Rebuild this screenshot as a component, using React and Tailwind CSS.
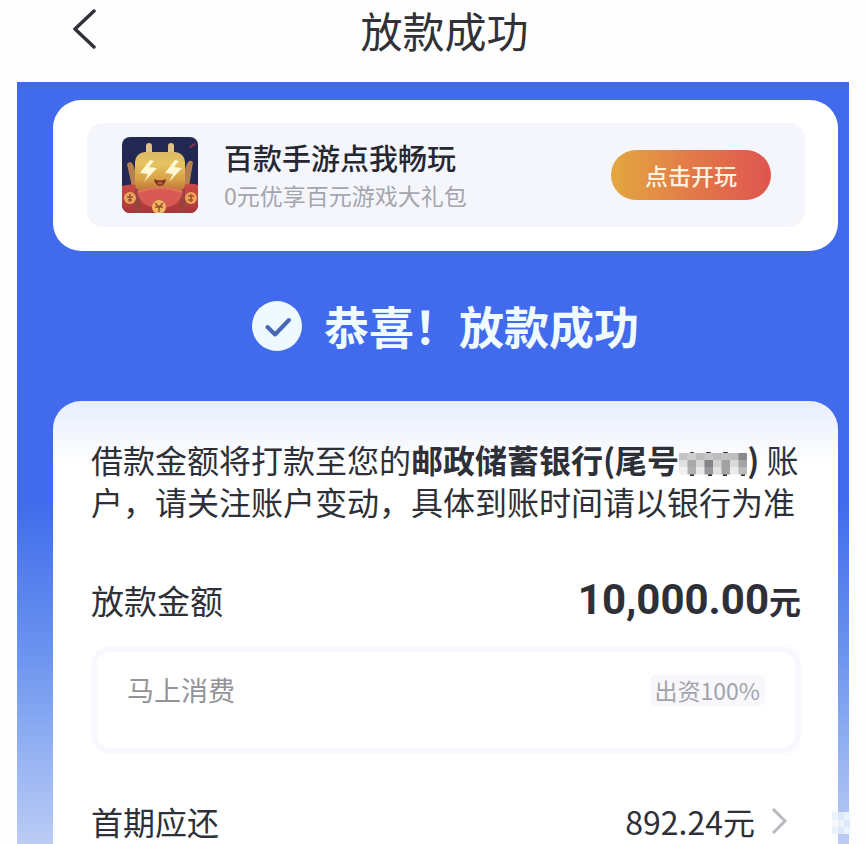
const maskCells = [
  ["#c4c4c4", "#cfcfcf", "#bdbdbd", "#c6c6c6", "#bcbcbc", "#c3c3c3", "#bebebe", "#8a8a8a"],
  ["#e0e0e0", "#a9a9a9", "#d6d6d6", "#858589", "#d2d2d2", "#a2a2a2", "#dadada", "#a4a4a6"],
  ["#f0f0f0", "#b0b0b0", "#e8e8e8", "#97979a", "#e2e2e2", "#a3a3a3", "#ebebeb", "#bcbcbe"],
];

function MaskedDigits() {
  return (
    <svg className="inline-block w-[68px] h-6" viewBox="0 0 68 24" aria-hidden="true">
      <g fill="#2e3038">
        <rect x="11" y="0" width="4" height="3" rx="1" />
        <rect x="27" y="0" width="5" height="3" rx="1" />
        <rect x="44" y="0" width="5" height="3" rx="1" />
        <rect x="11" y="21" width="4" height="3" />
        <rect x="29" y="21" width="4" height="3" />
        <rect x="44" y="21" width="4" height="3" />
        <rect x="62" y="21" width="4" height="3" />
      </g>
      {maskCells.map((row, y) =>
        row.map((fill, x) => (
          <rect key={`${x}-${y}`} x={x * 8.5} y={1 + y * 7} width="9" height="7.5" fill={fill} />
        ))
      )}
    </svg>
  );
}

function GameIcon() {
  return (
    <svg className="size-[76px] rounded-lg shrink-0" viewBox="0 0 76 76" aria-hidden="true">
      <defs>
        <linearGradient id="face" x1="0" y1="0" x2="0" y2="1">
          <stop offset="0" stopColor="#d9b865" />
          <stop offset="0.3" stopColor="#e6c35f" />
          <stop offset="0.7" stopColor="#d89c45" />
          <stop offset="1" stopColor="#b96a37" />
        </linearGradient>
        <linearGradient id="suit" x1="0" y1="0" x2="0" y2="1">
          <stop offset="0" stopColor="#cb4a46" />
          <stop offset="1" stopColor="#a8383a" />
        </linearGradient>
      </defs>
      <rect width="76" height="76" fill="#222851" />
      <path d="M67 10l5-4 2 1-5 4z" fill="#8e3048" />
      <path d="M5 27q4-5 7 3l5 20H10z" fill="#b58152" />
      <path d="M71 25q-4-4-7 4l-6 21h9z" fill="#b58152" />
      <rect x="24" y="6" width="6" height="13" rx="3" fill="#e0c285" />
      <rect x="46" y="6" width="6" height="13" rx="3" fill="#e0c285" />
      <path d="M0 49q10-3 17 0h43q8-4 16-1v28H0z" fill="url(#suit)" />
      <path d="M13 52h5v24h-5zM58 52h5v24h-5z" fill="#97453c" />
      <rect x="13" y="15" width="50" height="41" rx="10" fill="url(#face)" />
      <path d="M15 54q23-7 46 0-3 17-23 17T15 54z" fill="#d85a54" />
      <path d="M16 55q22-8 44 0" fill="none" stroke="#e1745b" strokeWidth="2" />
      <path d="M28 23L18 36l8 1-4 8 13-14-8-1 5-6zM53 23L43 36l8 1-4 8 13-14-8-1 5-6z" fill="#fff9d4" />
      <path d="M32 42q6 3 12 0-1 7-6 7t-6-7z" fill="#79351f" />
      <path d="M35 46q3-2 6 0-3 3-6 0z" fill="#d4564a" />
      <circle cx="8" cy="61" r="6" fill="#e9a65c" />
      <circle cx="69" cy="61" r="6" fill="#e9a65c" />
      <circle cx="37" cy="70" r="7" fill="#f0b863" />
      <path d="M5 60h6M8 57v8M6 63h4M66 59h6M69 57v8M66 63h5M33 66l4 4 4-4M33 70h8M37 70v5" stroke="#a04c2b" strokeWidth="1.5" fill="none" />
    </svg>
  );
}

function PromoCard() {
  return (
    <section className="rounded-[28px] bg-white pt-[23px] pb-6 pl-[34px] pr-[33px]">
      <div className="flex items-center rounded-2xl bg-[#f5f6fc] py-[14px] pl-[35px] pr-[34px]">
        <GameIcon />
        <div className="ml-[26px] flex-1">
          <h2 className="text-[29px] leading-10 font-medium text-[#252832]">百款手游点我畅玩</h2>
          <p className="text-[23px] leading-9 text-[#a4a5ad]">0元优享百元游戏大礼包</p>
        </div>
        <button
          type="button"
          className="h-[50px] w-40 shrink-0 rounded-full bg-linear-to-r from-[#e2a740] via-[#e27a48] to-[#de544f] text-[23px] leading-8 font-medium text-[#fff2df]"
        >
          点击开玩
        </button>
      </div>
    </section>
  );
}

function LoanCard() {
  return (
    <section className="flex-1 rounded-t-[28px] bg-linear-to-b from-[#e6edfc] to-white to-[64px] pt-[37px] pl-[38px] pr-[37px] text-[#2e3038]">
      <p className="text-[32px] leading-[42px]">
        借款金额将打款至您的
        <b className="font-bold">
          邮政储蓄银行(尾号
          <MaskedDigits />)
        </b>{" "}
        账户，请关注账户变动，具体到账时间请以银行为准
      </p>

      <div className="mt-[51px] flex items-center justify-between">
        <span className="text-[33px] leading-[54px]">放款金额</span>
        <span className="flex items-center font-bold">
          <span className="font-['Roboto',sans-serif] text-[42px] leading-[54px]">10,000.00</span>
          <span className="text-[32px] leading-[54px]">元</span>
        </span>
      </div>

      <div className="mt-[19px] flex h-[108px] items-start justify-between rounded-[20px] border-[6px] border-[#f8f9fe] pt-[18px] pl-[30px] pr-[30px]">
        <span className="text-[27px] leading-10 text-[#939399]">马上消费</span>
        <span className="mt-1 rounded-md bg-[#f8f8fc] px-[5px] text-[23px] leading-8 text-[#a2a3aa]">出资100%</span>
      </div>

      <div className="mt-[42px] flex items-center justify-between text-[32px] leading-[50px]">
        <span>首期应还</span>
        <a href="#plan" className="flex items-center">
          892.24元
          <svg className="ml-4 mr-[14px] h-[26px] w-4" viewBox="0 0 16 26" fill="none" stroke="#b9bac0" strokeWidth="3">
            <path d="M2 1l12 12L2 25" />
          </svg>
        </a>
      </div>
    </section>
  );
}

export default function App() {
  return (
    <div className="relative flex min-h-screen flex-col bg-[#fefefe] font-['Noto_Sans_CJK_SC',sans-serif]">
      <header className="grid h-[82px] grid-cols-[1fr_auto_1fr] items-start pl-[72px] pr-[49px]">
        <button type="button" aria-label="返回" className="mt-[9px] w-6">
          <svg className="h-10 w-6" viewBox="0 0 24 40" fill="none" stroke="#303238" strokeWidth="3.5" strokeLinecap="round" strokeLinejoin="round">
            <path d="M22 2L3 20l19 18" />
          </svg>
        </button>
        <h1 className="text-[42px] leading-[60px] text-[#303238]">放款成功</h1>
      </header>

      <main className="mx-[17px] flex flex-1 flex-col bg-linear-to-b from-[#416bec] from-55% via-[#6c94ef] via-75% to-[#bccdf5] pt-[18px] pl-9 pr-[11px]">
        <PromoCard />
        <div className="flex items-center justify-center gap-[22px] py-[45px]">
          <svg className="size-[50px]" viewBox="0 0 50 50" fill="none">
            <circle cx="25" cy="25" r="25" fill="#eefaff" />
            <path d="M15.500 26l7.500 7.500L37 19" stroke="#4767b5" strokeWidth="4" strokeLinecap="round" strokeLinejoin="round" />
          </svg>
          <h2 className="text-[45px] leading-[60px] font-bold text-[#f0fbff]">恭喜！放款成功</h2>
        </div>
        <LoanCard />
      </main>

      <svg className="absolute right-4 bottom-3 h-[22px] w-[18px]" viewBox="0 0 18 22" aria-hidden="true">
        <path fill="#eaf2fb" d="M0 0h18v22H0z" />
        <path fill="#dde8f8" d="M6 0h6v8H6zM12 8h6v7h-6zM6 15h6v7H6z" />
        <path fill="#f5f9fd" d="M0 8h6v7H0z" />
      </svg>
    </div>
  );
}
